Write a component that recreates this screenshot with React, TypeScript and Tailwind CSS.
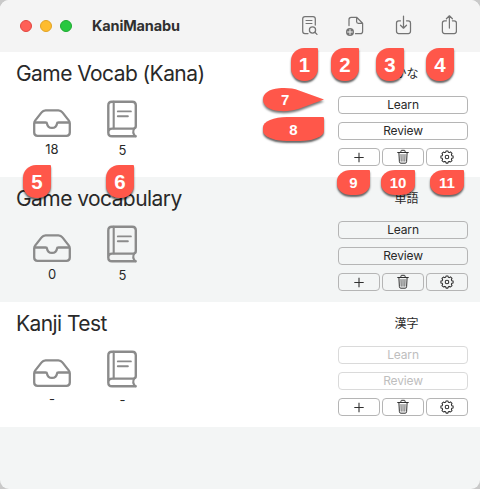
import type { ReactNode } from 'react';

function InboxIcon() {
  return (
    <svg className="h-7 w-[38px]" viewBox="0 0 38 28" fill="none" stroke="#8b8b8b" strokeWidth="2.3" strokeLinejoin="round">
      <path d="M1.2 14.5V23.5Q1.2 26.8 4.5 26.8H33.5Q36.8 26.8 36.8 23.5V14.5Q36.8 12.8 35.7 11.4L29.4 3.4Q27.9 1.3 25.4 1.3H12.6Q10.1 1.3 8.6 3.4L2.3 11.4Q1.2 12.8 1.2 14.5Z" />
      <path d="M1.5 13.5H12.5Q14 13.5 14.1 14.8Q14.7 18.9 19 18.9T23.9 14.8Q24 13.5 25.5 13.5H36.5" />
    </svg>
  );
}

function BookIcon() {
  return (
    <svg className="h-[38px] w-[31px]" viewBox="0 0 31 38" fill="none" stroke="#8b8b8b" strokeWidth="2.4" strokeLinecap="round" strokeLinejoin="round">
      <path d="M28.7 36.3H5Q1.3 36.3 1.3 32.5V5.5Q1.3 1.7 5 1.7H25.2Q28.8 1.7 28.8 5.3V26Q28.8 28.6 26.2 28.6H5.2Q1.3 28.6 1.3 32.5" />
      <path d="M6.7 1.9V28.3M27.1 28.8Q25 32.5 28.1 36.1" strokeWidth="2.1" />
      <path d="M10.8 11.4H23.9M10.8 16.2H20.9" strokeWidth="1.9" />
    </svg>
  );
}

function PlusIcon() {
  return (
    <svg className="size-4" viewBox="0 0 16 16" stroke="#303030" strokeWidth="1.1">
      <path d="M3.3 8.5H12.7M8 3.8V13.2" />
    </svg>
  );
}

function TrashIcon() {
  return (
    <svg className="size-4" viewBox="0 0 16 16" fill="none" stroke="#303030" strokeWidth="1" strokeLinecap="round" strokeLinejoin="round">
      <path d="M2.7 3.5H13.3M5.9 3.3V2.2Q5.9 1.3 6.8 1.3H9.2Q10.1 1.3 10.1 2.2V3.3M3.9 3.8L4.4 12.7Q4.5 14.2 5.8 14.2H10.2Q11.5 14.2 11.6 12.7L12.1 3.8" />
      <path d="M6 5.5L6.2 12.2M8 5.5V12.2M10 5.5L9.8 12.2" strokeWidth=".75" />
    </svg>
  );
}

function GearIcon() {
  return (
    <svg className="size-4" viewBox="0 0 16 16" fill="none" stroke="#303030" strokeWidth="1.05" strokeLinejoin="round">
      <path d="M7.1 1.9H8.9L9.3 3.2L10.3 3.6L11.5 2.9L13 4.4L12.4 5.6L12.8 6.7L14.1 7.1V8.9L12.8 9.3L12.4 10.4L13 11.6L11.6 13L10.4 12.4L9.3 12.8L8.9 14.1H7.1L6.7 12.8L5.6 12.4L4.4 13L3 11.6L3.6 10.4L3.2 9.3L1.9 8.9V7.1L3.2 6.7L3.6 5.6L3 4.4L4.4 3L5.6 3.6L6.7 3.2Z" />
      <circle cx="8" cy="8" r="1.8" />
    </svg>
  );
}

function Stat({ icon, value, className }: { icon: ReactNode; value: string; className: string }) {
  return (
    <div className={`flex flex-col items-center ${className}`}>
      {icon}
      <span className="mt-1 text-[13px] leading-4">{value}</span>
    </div>
  );
}

function WideButton({ label, disabled }: { label: string; disabled?: boolean }) {
  return (
    <button disabled={disabled} className="flex h-[18px] w-full items-center justify-center rounded-[4px] border border-[#b5b5b5] text-[12px] tracking-[-0.15px] disabled:border-[#dadada] disabled:text-[#bebebe]">
      {label}
    </button>
  );
}

function SmallButton({ children }: { children: ReactNode }) {
  return <button className="flex h-[18px] flex-1 items-center justify-center rounded-[4px] border border-[#b5b5b5]">{children}</button>;
}

type Deck = { name: string; script: string; queued: string; learned: string; disabled?: boolean };

const decks: Deck[] = [
  { name: 'Game Vocab (Kana)', script: 'かな', queued: '18', learned: '5' },
  { name: 'Game vocabulary', script: '単語', queued: '0', learned: '5' },
  { name: 'Kanji Test', script: '漢字', queued: '-', learned: '-', disabled: true },
];

function DeckRow({ deck }: { deck: Deck }) {
  return (
    <section className="flex h-[125px] justify-between pr-3 pl-4 odd:bg-white even:bg-[#f3f5f5]">
      <div className="flex flex-col">
        <h2 className="mt-[7px] h-[30px] text-[21px] leading-[30px] tracking-[-0.57px] whitespace-nowrap">{deck.name}</h2>
        <div className="mt-3 flex pl-[17px]">
          <Stat icon={<InboxIcon />} value={deck.queued} className="w-[38px] pt-2" />
          <Stat icon={<BookIcon />} value={deck.learned} className="ml-9 w-[31px] -mt-[1px]" />
        </div>
      </div>
      <div className="flex w-[130px] flex-col">
        <div className="mt-[14px] h-4 pl-[7px] text-center text-[12px] leading-4">{deck.script}</div>
        <div className="mt-[14px] flex flex-col gap-2">
          <WideButton label="Learn" disabled={deck.disabled} />
          <WideButton label="Review" disabled={deck.disabled} />
          <div className="flex gap-[2px]">
            <SmallButton><PlusIcon /></SmallButton>
            <SmallButton><TrashIcon /></SmallButton>
            <SmallButton><GearIcon /></SmallButton>
          </div>
        </div>
      </div>
    </section>
  );
}

function Toolbar() {
  return (
    <header className="flex h-[52px] items-center bg-[#f4f4f4] pl-5">
      <div className="flex gap-2">
        <span className="size-3 rounded-full border border-[#e2463f] bg-[#ff5f57]" />
        <span className="size-3 rounded-full border border-[#e1a325] bg-[#febc2e]" />
        <span className="size-3 rounded-full border border-[#1eaa31] bg-[#28c840]" />
      </div>
      <h1 className="ml-5 flex-1 text-[14.5px] font-bold tracking-[-0.15px] text-[#303030]">KaniManabu</h1>
      <svg className="h-[52px] w-[180px]" viewBox="300 0 180 52" fill="none" stroke="#747474" strokeWidth="1.25" strokeLinecap="round" strokeLinejoin="round">
        <path d="M308 33.5H305Q302.7 33.5 302.7 31.2V18.8Q302.7 16.5 305 16.5H313Q315.3 16.5 315.3 18.8V25" />
        <path d="M306 20.5H312M306 23.5H312" strokeWidth="1" />
        <circle cx="312.5" cy="30" r="3.1" />
        <path d="M314.9 32.3L317 34.4" />
        <path d="M349 25.5V19.5Q349 17.3 351.2 17.3H356.6L362.6 23.3V31.5Q362.6 33.7 360.4 33.7H355.5M356.6 17.5V21.5Q356.6 23.3 358.4 23.3H362.4" />
        <circle cx="350" cy="32" r="4" fill="#747474" stroke="none" />
        <path d="M347.6 32H352.4M350 29.6V34.4" stroke="#f4f4f4" strokeWidth="1" />
        <path d="M400.5 20.8H398.7Q396.5 20.8 396.5 23V31.3Q396.5 33.5 398.7 33.5H408.3Q410.5 33.5 410.5 31.3V23Q410.5 20.8 408.3 20.8H406.5M403.5 16V28M400.5 25.2L403.5 28.2L406.5 25.2" />
        <path d="M446.4 20.8H444.6Q442.4 20.8 442.4 23V31.3Q442.4 33.5 444.6 33.5H454.2Q456.4 33.5 456.4 31.3V23Q456.4 20.8 454.2 20.8H452.4M449.4 28V15.8M446.4 18.8L449.4 15.8L452.4 18.8" />
      </svg>
    </header>
  );
}

const markers = [
  { label: '1', place: 'left-[291px] top-[48px] h-[33px] w-[27px] rounded-[13px] pt-px text-[20.5px]' },
  { label: '2', place: 'left-[331px] top-[48px] h-[33px] w-[28px] rounded-[13px] pt-px text-[20.5px]' },
  { label: '3', place: 'left-[376px] top-[48px] h-[33px] w-[28px] rounded-[13px] pt-px text-[20.5px]' },
  { label: '4', place: 'left-[426px] top-[48px] h-[33px] w-[28px] rounded-[13px] pt-px text-[20.5px]' },
  { label: '5', place: 'left-[23px] top-[165px] h-[33px] w-[28px] rounded-[13px] pt-px text-[20.5px]' },
  { label: '6', place: 'left-[106px] top-[165px] h-[33px] w-[28px] rounded-[13px] pt-px text-[20.5px]' },
  { label: '8', place: 'left-[263px] top-[117px] h-6 w-[61px] rounded-[24px/10px] pt-[2px] text-[15px]' },
  { label: '9', place: 'left-[337px] top-[170px] h-[25px] w-[33px] rounded-[14px/11px] pt-px text-[15px]' },
  { label: '10', place: 'left-[381px] top-[170px] h-[25px] w-[34px] rounded-[14px/11px] pt-px text-[15px]' },
  { label: '11', place: 'left-[430px] top-[170px] h-[25px] w-[34px] rounded-[14px/11px] pt-px text-[15px]' },
];

function Markers() {
  return (
    <div className="pointer-events-none absolute inset-0 font-['Liberation_Sans',sans-serif] font-bold text-white">
      {markers.map((m) => (
        <div key={m.label} className={`absolute flex items-center justify-center rounded-tr-[1px] bg-[#ff574a] shadow-[0_2px_2px_rgba(0,0,0,0.6)] ${m.place}`}>
          {m.label}
        </div>
      ))}
      <div className="absolute top-[88px] left-[263px] h-6 w-[61px]">
        <svg className="absolute inset-0 overflow-visible drop-shadow-[0_2px_1px_rgba(0,0,0,0.55)]" width="61" height="24" viewBox="0 0 61 24">
          <path d="M61 11.5L36 2.4C30 0 23 -.3 16 .2C6 .9 0 5.5 0 11.5S6 22.2 16 23.1C23 23.6 30 22.9 36 20.8Z" fill="#ff574a" />
        </svg>
        <span className="relative ml-[18px] text-[15px] leading-[23px]">7</span>
      </div>
    </div>
  );
}

export default function App() {
  return (
    <div className="bg-[#c9c9c9]">
      <main className="relative h-[489px] w-[480px] overflow-hidden rounded-[9px] bg-[#f3f5f5] font-['Inter','Noto_Sans_CJK_JP',sans-serif] text-[#292929]">
        <Toolbar />
        <div>{decks.map((deck) => <DeckRow key={deck.name} deck={deck} />)}</div>
        <Markers />
      </main>
    </div>
  );
}
